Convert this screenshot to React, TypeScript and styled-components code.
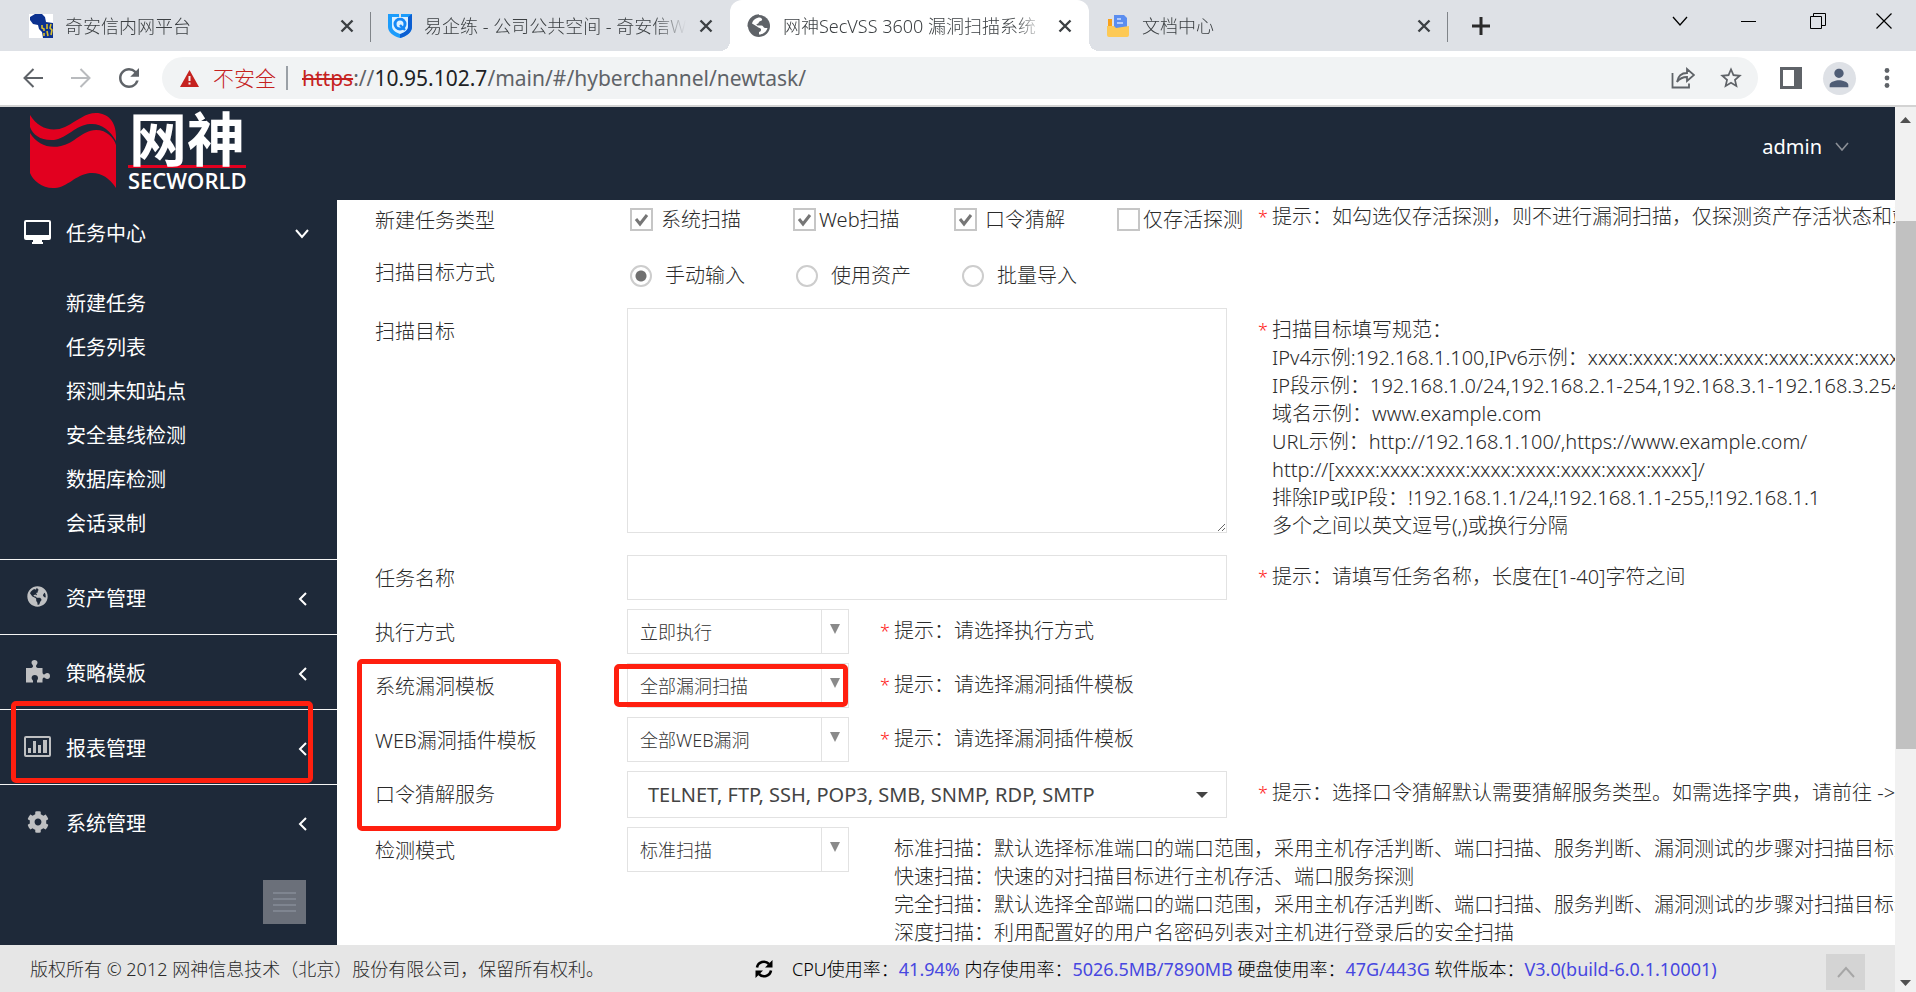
import React from 'react';
import styled, { createGlobalStyle, css } from 'styled-components';
import { FaCog, FaGlobeAmericas } from 'react-icons/fa';
import { MdPerson, MdRefresh, MdStarBorder } from 'react-icons/md';

const navy = '#1e2939';
const line = '#e2e2e2';
const red = '#ff1f0f';

const GlobalStyle = createGlobalStyle`
  * { box-sizing: border-box; }
  body { margin: 0; overflow: hidden; }
  body, button, input, select, textarea {
    font-family: "Noto Sans", "Noto Sans CJK SC", sans-serif;
    font-weight: 300;
  }
  button { border: 0; padding: 0; background: none; color: inherit; cursor: pointer; }
  svg { display: block; flex: none; }
`;

const Window = styled.div`
  display: flex;
  flex-direction: column;
  height: 100vh;
  background: #fff;
  color: #2a2a2a;
`;

/* ---------- browser chrome ---------- */

const TabStrip = styled.div`
  display: flex;
  flex: none;
  height: 51px;
  padding-left: 12px;
  background: #dee1e6;
`;

const Tab = styled.div<{ $active?: boolean; $divider?: boolean }>`
  position: relative;
  display: flex;
  align-items: center;
  gap: 12px;
  flex: 0 1 359px;
  min-width: 0;
  padding: 0 16px 0 17px;
  color: #3c4043;
  font-size: 18px;
  line-height: 24px;
  ${p => p.$active && css`
    background: #fff;
    border-radius: 12px 12px 0 0;
    &::before, &::after {
      content: '';
      position: absolute;
      bottom: 0;
      width: 10px;
      height: 10px;
    }
    &::before { right: 100%; background: radial-gradient(circle at 0 0, transparent 10px, #fff 10px); }
    &::after { left: 100%; background: radial-gradient(circle at 100% 0, transparent 10px, #fff 10px); }
  `}
  ${p => p.$divider && css`
    &::after {
      content: '';
      position: absolute;
      right: 0;
      top: 12px;
      width: 1px;
      height: 30px;
      background: #808489;
    }
  `}
`;

const TabTitle = styled.span`
  flex: 1;
  min-width: 0;
  overflow: hidden;
  white-space: nowrap;
  mask-image: linear-gradient(to right, #000 calc(100% - 30px), transparent);
`;

const IconButton = styled.button<{ $w: number; $dim?: boolean }>`
  display: flex;
  align-items: center;
  justify-content: center;
  flex: none;
  width: ${p => p.$w}px;
  ${p => p.$dim && css`color: #b9bbbe;`}
`;

const WindowControls = styled.div`
  display: flex;
  height: 42px;
  margin-left: auto;
  color: #000;
`;

const Toolbar = styled.div`
  display: flex;
  align-items: center;
  flex: none;
  height: 56px;
  padding: 0 5px 0 9px;
  border-bottom: 2px solid #d3d3d3;
  color: #5f6368;
`;

const Omnibox = styled.div`
  display: flex;
  align-items: center;
  flex: 1;
  height: 42px;
  margin: 0 9px;
  padding: 0 3px 0 18px;
  border-radius: 21px;
  background: #f1f3f4;
  font-size: 21px;
  line-height: 28px;
`;

const Insecure = styled.span`
  display: flex;
  align-items: center;
  gap: 14px;
  padding-right: 10px;
  border-right: 2px solid #9aa0a6;
  color: #c5221f;
  line-height: 24px;
`;

const Url = styled.span`
  flex: 1;
  margin-left: 14px;
  font-weight: 400;
  s { color: #c5221f; }
  b { color: #202124; font-weight: 400; }
`;

const Avatar = styled.span`
  display: flex;
  align-items: center;
  justify-content: center;
  width: 33px;
  height: 33px;
  border-radius: 50%;
  background: #dee1e6;
  color: #4f5d75;
`;

/* ---------- page frame ---------- */

const Viewport = styled.div`
  display: flex;
  flex: 1;
  min-height: 0;
`;

const Page = styled.div`
  display: flex;
  flex-direction: column;
  flex: 1;
  min-width: 0;
`;

const Header = styled.header`
  display: flex;
  justify-content: space-between;
  flex: none;
  height: 93px;
  padding: 6px 46px 0 30px;
  background: ${navy};
  color: #fff;
`;

const Brand = styled.div`
  display: flex;
  gap: 12px;
`;

const BrandName = styled.div`
  display: flex;
  flex-direction: column;
  width: 118px;
  font-weight: 700;
`;

const BrandTitle = styled.span`
  height: 55px;
  border-bottom: 3px solid #e2001f;
  font-family: "Noto Sans CJK SC", sans-serif;
  font-size: 58px;
  line-height: 46px;
  text-align: center;
`;

const BrandLatin = styled.span`
  font-family: "Open Sans", sans-serif;
  font-size: 22px;
  font-weight: 600;
  line-height: 24px;
`;

const UserMenu = styled.button`
  display: flex;
  align-items: center;
  gap: 13px;
  height: 66px;
  font-size: 20px;
  font-weight: 400;
  svg { color: #8b8f96; }
`;

const Body = styled.div`
  display: flex;
  flex: 1;
  min-height: 0;
`;

const Sidebar = styled.nav`
  display: flex;
  flex-direction: column;
  flex: none;
  width: 337px;
  background: ${navy};
  color: #fff;
`;

const NavGroup = styled.div<{ $first?: boolean }>`
  position: relative;
  ${p => !p.$first && css`border-top: 1px solid #f4f4f4;`}
`;

const NavHead = styled.button<{ $first?: boolean }>`
  display: flex;
  align-items: center;
  width: 100%;
  height: ${p => (p.$first ? 64 : 74)}px;
  padding: 3px ${p => (p.$first ? 28 : 30)}px 0 23px;
  font-size: 20px;
  font-weight: 400;
  line-height: 28px;
  text-align: left;
`;

const NavIcon = styled.span<{ $bright?: boolean }>`
  display: flex;
  justify-content: center;
  width: 29px;
  margin-right: 14px;
  padding-bottom: 4px;
  color: ${p => (p.$bright ? '#fff' : '#bfc0c2')};
`;

const NavText = styled.span`
  flex: 1;
`;

const SubMenu = styled.ul`
  margin: 0;
  padding: 18px 0 13px 66px;
  list-style: none;
`;

const SubLink = styled.a`
  display: block;
  color: #fff;
  font-size: 20px;
  font-weight: 400;
  line-height: 44px;
  text-decoration: none;
`;

const CollapseButton = styled.button`
  display: flex;
  align-items: center;
  justify-content: center;
  align-self: flex-end;
  width: 43px;
  height: 44px;
  margin: auto 31px 21px 0;
  background: #6b707a;
  color: #868c98;
`;

/* Red frame that marks the parts to look at. */
const Mark = styled.span<{ $top: number; $left: number; $w: number; $h: number }>`
  position: absolute;
  top: ${p => p.$top}px;
  left: ${p => p.$left}px;
  width: ${p => p.$w}px;
  height: ${p => p.$h}px;
  border: 5px solid ${red};
  border-radius: 5px;
  pointer-events: none;
`;

/* ---------- form ---------- */

const Form = styled.form`
  flex: 1;
  min-width: 0;
  padding-left: 38px;
  overflow: hidden;
`;

const Row = styled.div`
  position: relative;
  display: grid;
  grid-template-columns: 252px minmax(240px, 600px) minmax(0, 1fr);
  margin-bottom: 9px;
  font-size: 20px;
`;

const Label = styled.label<{ $h?: number }>`
  padding-top: 3px;
  line-height: ${p => p.$h ?? 42}px;
`;

const Choices = styled.div<{ $h: number; $end?: number }>`
  display: flex;
  height: ${p => p.$h}px;
  padding: 0 0 ${p => p.$end ?? 0}px 3px;
  white-space: nowrap;
`;

const Choice = styled.label<{ $w: number; $gap: number }>`
  display: flex;
  align-items: center;
  flex: none;
  gap: ${p => p.$gap}px;
  width: ${p => p.$w}px;
  line-height: 28px;
`;

const Check = styled.input`
  appearance: none;
  flex: none;
  width: 23px;
  height: 23px;
  margin: 0;
  border: 2px solid #c6c6c6;
  background: #fff center / 19px 19px no-repeat;
  &:checked {
    background-image: url("data:image/svg+xml,%3Csvg xmlns='http://www.w3.org/2000/svg' viewBox='0 0 19 19'%3E%3Cpath d='M4 9l4 5 7-9' fill='none' stroke='%23767676' stroke-width='3'/%3E%3C/svg%3E");
  }
`;

const Radio = styled.input`
  appearance: none;
  flex: none;
  width: 22px;
  height: 22px;
  margin: 0;
  border: 2px solid #cdcdcd;
  border-radius: 50%;
  &:checked { background: radial-gradient(circle, #707070 5px, transparent 6px); }
`;

const TargetBox = styled.textarea`
  display: block;
  width: 100%;
  height: 225px;
  margin: 0 0 13px;
  border: 1px solid ${line};
  outline: 0;
  background: transparent;
  font-size: 18px;
`;

const TextBox = styled.input`
  width: 100%;
  height: 45px;
  border: 1px solid ${line};
  font-size: 18px;
`;

const SelectLine = styled.div`
  display: flex;
  grid-column: 2 / 4;
  min-width: 0;
`;

const SelectFrame = styled.div`
  position: relative;
  flex: none;
  width: 222px;
  height: 45px;
`;

const Select = styled.select`
  appearance: none;
  width: 100%;
  height: 45px;
  padding: 0 40px 0 12px;
  border: 1px solid ${line};
  border-radius: 0;
  background: #fff;
  color: #333;
  font-size: 18px;
  line-height: 28px;
`;

const SelectArrow = styled.span`
  position: absolute;
  top: 1px;
  right: 1px;
  display: flex;
  justify-content: center;
  width: 27px;
  height: 43px;
  padding-top: 14px;
  border-left: 1px solid ${line};
  color: #8a8a8a;
  pointer-events: none;
`;

const MultiSelect = styled.button`
  display: flex;
  align-items: center;
  justify-content: space-between;
  width: 100%;
  height: 47px;
  padding: 0 18px 0 20px;
  border: 1px solid ${line};
  color: #444;
  font-size: 20px;
  font-weight: 400;
  line-height: 28px;
  white-space: nowrap;
`;

const Hint = styled.div<{ $top?: number; $indent?: number }>`
  display: flex;
  min-width: 0;
  padding: ${p => p.$top ?? 8}px 0 0 ${p => p.$indent ?? 31}px;
  font-size: 20px;
  line-height: 28px;
  white-space: nowrap;
  overflow: hidden;
`;

const Star = styled.span`
  flex: none;
  width: 14px;
  color: #f22;
  font-size: 18px;
`;

const Lines = styled.div`
  p { margin: 0; }
`;

/* ---------- footer and scrollbar ---------- */

const Footer = styled.footer`
  display: flex;
  align-items: center;
  flex: none;
  height: 47px;
  padding: 0 30px;
  background: #e6e6e6;
  font-size: 18px;
  line-height: 28px;
  white-space: nowrap;
`;

const Copyright = styled.span`
  flex: 0 0 725px;
`;

const Stats = styled.span`
  flex: 1;
  margin-left: 19px;
  color: #000;
  b { color: #4747e0; font-weight: 400; }
`;

const TopButton = styled.button`
  display: flex;
  align-items: center;
  justify-content: center;
  width: 39px;
  height: 36px;
  margin-top: 6px;
  background: #d4d4d4;
  color: #a6a6a6;
`;

const ScrollTrack = styled.div`
  display: flex;
  flex-direction: column;
  align-items: center;
  flex: none;
  width: 21px;
  padding: 10px 0 6px;
  background: #f1f1f1;
  color: #505050;
`;

const ScrollRail = styled.div`
  display: flex;
  flex: 1;
  flex-direction: column;
  align-self: stretch;
  padding: 98px 0 0 1px;
`;

const Thumb = styled.div`
  height: 69.5%;
  background: #c1c1c1;
`;

/* ---------- icons ---------- */

type StrokeProps = { w: number; h: number; d: string; sw?: number };
const Stroke = ({ w, h, d, sw = 2 }: StrokeProps) => (
  <svg width={w} height={h} viewBox={`0 0 ${w} ${h}`} fill="none" stroke="currentColor" strokeWidth={sw} aria-hidden="true">
    <path d={d} />
  </svg>
);
type ShapeProps = { w: number; h: number; d: string };
const Shape = ({ w, h, d }: ShapeProps) => (
  <svg width={w} height={h} viewBox={`0 0 ${w} ${h}`} fill="currentColor" fillRule="evenodd" aria-hidden="true">
    <path d={d} />
  </svg>
);

const IntranetIcon = () => (
  <svg width="24" height="24" viewBox="0 0 24 24" aria-hidden="true">
    <rect width="24" height="24" fill="#fff" />
    <path d="M1 3l5-3 7 0 3 3 1 5 7 1v15H14l-1-6-3-3-1-4-5-1-3-4z" fill="#0b3190" />
    <path d="M13 11v3l2 1v2M15 19v3M18 10v5M18 17l1 5M22 10l-1 4 2 2-1 5" stroke="#d9bf2c" strokeWidth="1.6" fill="none" />
  </svg>
);
const ShieldIcon = () => (
  <svg width="24" height="24" viewBox="0 0 24 24" aria-hidden="true">
    <path d="M0 0h24v13c0 5-5 9-12 11C5 22 0 18 0 13z" fill="#1c9cfb" />
    <path d="M24 0v13c0 5-5 9-12 11v-4c5-2 8-4 8-8V3z" fill="#0c5fd2" />
    <path d="M4 3h16v9c0 4-3 6-8 8-5-2-8-4-8-8z" fill="#fff" opacity=".85" />
    <circle cx="12" cy="10" r="5" fill="none" stroke="#1687f5" strokeWidth="3" />
    <path d="M12 11l5 5" stroke="#1687f5" strokeWidth="2.400" />
    <path d="M11 0h2v4h-2z" fill="#dee1e6" />
  </svg>
);
const SiteGlobeIcon = () => (
  <svg width="24" height="24" viewBox="0 0 24 24" aria-hidden="true">
    <circle cx="12" cy="12" r="11" fill="#5f6368" />
    <path d="M13 3.500c3 1 2.500 3 .5 3.500-2 .5-1.500 2.500-3.500 3-1 .3-.5 1.500.5 1.500h4c2 0 1.500 2.500 3.500 2.500h2.500c-1 4-4.500 6.500-8.500 6.500v-2.500c2-.5 2-1.500 2-3-1-1.500-3-1-4-2.500L5 9.500C6 6 9 3.500 13 3.500z" fill="#fff" />
    <path d="M12 1a11 11 0 0 0-6 1.900A11 11 0 0 0 1.200 12c2 1 4 2 5 5l2 4" fill="none" stroke="#5f6368" strokeWidth="1.500" />
  </svg>
);
const FolderIcon = () => (
  <svg width="24" height="24" viewBox="0 0 24 24" aria-hidden="true">
    <path d="M2 5h4v9H2z" fill="#f9a11b" />
    <path d="M8 1h10l3 3v12H8z" fill="#5b8def" />
    <path d="M11 5h4M11 9h6" stroke="#cfe0ff" strokeWidth="1.5" />
    <path d="M1 12h7l2 2 13-2v9a2 2 0 0 1-2 2H3a2 2 0 0 1-2-2z" fill="#fdc955" />
  </svg>
);
const FlagLogo = () => (
  <svg width="86" height="76" viewBox="0 0 86 76" role="img" aria-label="SECWORLD">
    <path d="M0 2C8 15 22 20 35 14C49 7 55 0 66 0C78 0 86 9 86 23V28C80 17 71 10 60 11C45 12 38 25 24 27C11 28 3 22 0 14Z" fill="#e2001f" />
    <path d="M0 20C7 31 18 36 31 33C45 30 51 18 66 17C77 17 84 25 86 32V75C79 64 70 59 60 60C45 62 38 74 25 75C13 76 3 68 0 60Z" fill="#e2001f" />
  </svg>
);
const CloseIcon = () => <Stroke w={16} h={16} d="M2.500 2.500l11 11M13.500 2.500l-11 11" sw={2.4} />;
const ShareIcon = () => (
  <Stroke w={24} h={24} d="M1.500 7v14.500h16.500v-4M6 16c1-6 4-9 10-9V3l7 6-7 6v-4c-4 0-7 1-10 5z" sw={1.8} />
);
const MonitorIcon = () => (
  <Shape w={27} h={24} d="M2 0h23a2 2 0 0 1 2 2v16a2 2 0 0 1-2 2h-7v2h1v2H8v-2h1v-2H2a2 2 0 0 1-2-2V2a2 2 0 0 1 2-2zM2 2v13h23V2z" />
);
const PuzzleIcon = () => (
  <Shape w={24} h={23} d="M0 8h4c2 0 3-.5 3-2 0-1-1.500-1.500-1.500-3.200C5.500 1 6.700 0 8.500 0s3 1 3 2.800C11.500 4.500 10 5 10 6c0 1.500 1 2 3 2h3.500v4c0 1.500.5 2.500 1.500 2.500s1.500-1.500 3.200-1.500c1.800 0 2.800 1.200 2.800 3s-1 3-2.800 3c-1.700 0-2.200-1.500-3.200-1.500s-1.500 1-1.500 2.500v2.500H11v-1.500c0-1 1-1.500 1-3 0-1.800-1.300-3-3.200-3s-3.200 1.200-3.200 3c0 1.500 1.400 2 1.400 3V22.500H0z" />
);
const ChartIcon = () => (
  <Shape w={27} h={21} d="M2 0h23a2 2 0 0 1 2 2v17a2 2 0 0 1-2 2H2a2 2 0 0 1-2-2V2a2 2 0 0 1 2-2zM2 2v17h23V2zM4 12h3v5H4zM9 5h3v12H9zM14 9h3v8h-3zM19 4h4v13h-4z" />
);
const SyncIcon = () => (
  <svg width="18" height="18" viewBox="0 0 18 18" aria-hidden="true">
    <path d="M2 7.500A7 7 0 0 1 14 4M16 10.500A7 7 0 0 1 4 14" fill="none" stroke="#000" strokeWidth="2.600" />
    <path d="M17.500 0v7.500H10zM.5 18v-7.500H8z" fill="#000" />
  </svg>
);

/* ---------- data ---------- */

const tabs = [
  { title: '奇安信内网平台', icon: <IntranetIcon />, divider: true },
  { title: '易企练 - 公司公共空间 - 奇安信Wiki', icon: <ShieldIcon /> },
  { title: '网神SecVSS 3600 漏洞扫描系统', icon: <SiteGlobeIcon />, active: true },
  { title: '文档中心', icon: <FolderIcon />, divider: true },
];
const subItems = ['新建任务', '任务列表', '探测未知站点', '安全基线检测', '数据库检测', '会话录制'];
const groups = [
  { text: '资产管理', icon: <FaGlobeAmericas size={21} /> },
  { text: '策略模板', icon: <PuzzleIcon /> },
  { text: '报表管理', icon: <ChartIcon />, marked: true },
  { text: '系统管理', icon: <FaCog size={22} /> },
];
const kinds = [
  { text: '系统扫描', on: true, w: 163, gap: 8 },
  { text: 'Web扫描', on: true, w: 161, gap: 3 },
  { text: '口令猜解', on: true, w: 163, gap: 8 },
  { text: '仅存活探测', on: false, w: 130, gap: 3 },
];
const targetModes = ['手动输入', '使用资产', '批量导入'];
const targetRules = [
  '扫描目标填写规范：',
  'IPv4示例:192.168.1.100,IPv6示例：xxxx:xxxx:xxxx:xxxx:xxxx:xxxx:xxxx:xxxx',
  'IP段示例：192.168.1.0/24,192.168.2.1-254,192.168.3.1-192.168.3.254',
  '域名示例：www.example.com',
  'URL示例：http://192.168.1.100/,https://www.example.com/',
  'http://[xxxx:xxxx:xxxx:xxxx:xxxx:xxxx:xxxx:xxxx]/',
  '排除IP或IP段：!192.168.1.1/24,!192.168.1.1-255,!192.168.1.1',
  '多个之间以英文逗号(,)或换行分隔',
];
const modeNotes = [
  '标准扫描：默认选择标准端口的端口范围，采用主机存活判断、端口扫描、服务判断、漏洞测试的步骤对扫描目标进行扫描',
  '快速扫描：快速的对扫描目标进行主机存活、端口服务探测',
  '完全扫描：默认选择全部端口的端口范围，采用主机存活判断、端口扫描、服务判断、漏洞测试的步骤对扫描目标进行扫描',
  '深度扫描：利用配置好的用户名密码列表对主机进行登录后的安全扫描',
];

type SelectFieldProps = {
  id: string;
  label: string;
  value: string;
  hint?: string;
  notes?: string[];
  children?: React.ReactNode;
};
const SelectField = ({ id, label, value, hint, notes, children }: SelectFieldProps) => (
  <Row>
    <Label htmlFor={id}>{label}</Label>
    <SelectLine>
      <SelectFrame>
        <Select id={id}><option>{value}</option></Select>
        <SelectArrow><Shape w={10} h={10} d="M0 0h10L5 10z" /></SelectArrow>
      </SelectFrame>
      {hint && <Hint><Star>*</Star>{hint}</Hint>}
      {notes && <Hint $indent={45}><Lines>{notes.map(n => <p key={n}>{n}</p>)}</Lines></Hint>}
    </SelectLine>
    {children}
  </Row>
);

export default function App() {
  return (
    <Window>
      <GlobalStyle />
      <TabStrip>
        {tabs.map(t => (
          <Tab key={t.title} $active={t.active} $divider={t.divider}>
            {t.icon}
            <TabTitle>{t.title}</TabTitle>
            <IconButton $w={16} aria-label="关闭标签页"><CloseIcon /></IconButton>
          </Tab>
        ))}
        <IconButton $w={66} aria-label="新标签页"><Stroke w={18} h={18} d="M9 0v18M0 9h18" sw={3} /></IconButton>
        <WindowControls>
          <IconButton $w={69} aria-label="搜索标签页"><Stroke w={16} h={10} d="M1 1l7 8 7-8" sw={1.3} /></IconButton>
          <IconButton $w={69} aria-label="最小化"><Stroke w={15} h={3} d="M0 1.500h15" sw={1} /></IconButton>
          <IconButton $w={69} aria-label="还原"><Stroke w={16} h={16} d="M.5 3.500h11v12H.5zM3.500 3V.5h12v12H12" sw={1} /></IconButton>
          <IconButton $w={64} aria-label="关闭"><Stroke w={16} h={16} d="M.5.5l15 15M15.500.5l-15 15" sw={1.2} /></IconButton>
        </WindowControls>
      </TabStrip>
      <Toolbar>
        <IconButton $w={48} aria-label="后退"><Stroke w={20} h={20} d="M20 10H2M10.500 1L1.500 10l9 9" /></IconButton>
        <IconButton $w={48} $dim aria-label="前进"><Stroke w={20} h={20} d="M0 10h18M9.500 1l9 9-9 9" /></IconButton>
        <IconButton $w={48} aria-label="重新加载"><MdRefresh size={30} /></IconButton>
        <Omnibox>
          <Insecure>
            <Shape w={19} h={17} d="M9.500 0L19 17H0zM8.500 6v5h2V6zM8.500 12.500v2h2v-2z" />
            不安全
          </Insecure>
          <Url><s>https</s>://<b>10.95.102.7</b>/main/#/hyberchannel/newtask/</Url>
          <IconButton $w={48} aria-label="分享"><ShareIcon /></IconButton>
          <IconButton $w={48} aria-label="收藏"><MdStarBorder size={26} /></IconButton>
        </Omnibox>
        <IconButton $w={48} aria-label="侧边栏"><Shape w={22} h={22} d="M0 0h22v22H0zM3 3v16h11V3z" /></IconButton>
        <IconButton $w={48} aria-label="用户"><Avatar><MdPerson size={28} /></Avatar></IconButton>
        <IconButton $w={48} aria-label="菜单">
          <svg width="6" height="20" viewBox="0 0 6 20" fill="currentColor"><circle cx="3" cy="2.500" r="2.400" /><circle cx="3" cy="10" r="2.400" /><circle cx="3" cy="17.500" r="2.400" /></svg>
        </IconButton>
      </Toolbar>
      <Viewport>
        <Page>
          <Header>
            <Brand>
              <FlagLogo />
              <BrandName><BrandTitle>网神</BrandTitle><BrandLatin>SECWORLD</BrandLatin></BrandName>
            </Brand>
            <UserMenu>admin<Stroke w={14} h={9} d="M1 1l6 7 6-7" sw={1.6} /></UserMenu>
          </Header>
          <Body>
            <Sidebar>
              <NavGroup $first>
                <NavHead $first>
                  <NavIcon $bright><MonitorIcon /></NavIcon>
                  <NavText>任务中心</NavText>
                  <Stroke w={14} h={10} d="M1 1l6 7 6-7" />
                </NavHead>
                <SubMenu>
                  {subItems.map(s => <li key={s}><SubLink href="#newtask">{s}</SubLink></li>)}
                </SubMenu>
              </NavGroup>
              {groups.map(g => (
                <NavGroup key={g.text}>
                  <NavHead>
                    <NavIcon>{g.icon}</NavIcon>
                    <NavText>{g.text}</NavText>
                    <Stroke w={9} h={14} d="M8 1L2 7l6 6" />
                  </NavHead>
                  {g.marked && <Mark $top={-9} $left={11} $w={302} $h={82} />}
                </NavGroup>
              ))}
              <CollapseButton aria-label="收起菜单"><Stroke w={23} h={20} d="M0 1h23M0 7h23M0 13h23M0 19h23" sw={1.5} /></CollapseButton>
            </Sidebar>
            <Form>
              <Row>
                <Label as="span" $h={36}>新建任务类型</Label>
                <Choices $h={43} $end={4} role="group" aria-label="新建任务类型">
                  {kinds.map(k => (
                    <Choice key={k.text} $w={k.w} $gap={k.gap}><Check type="checkbox" defaultChecked={k.on} />{k.text}</Choice>
                  ))}
                </Choices>
                <Hint $top={3}><Star>*</Star>提示：如勾选仅存活探测，则不进行漏洞扫描，仅探测资产存活状态和端口服务</Hint>
              </Row>
              <Row>
                <Label as="span" $h={36}>扫描目标方式</Label>
                <Choices $h={47} role="radiogroup" aria-label="扫描目标方式">
                  {targetModes.map((m, i) => (
                    <Choice key={m} $w={166} $gap={13}><Radio type="radio" name="target-mode" defaultChecked={i === 0} />{m}</Choice>
                  ))}
                </Choices>
              </Row>
              <Row>
                <Label htmlFor="target">扫描目标</Label>
                <TargetBox id="target" />
                <Hint><Star>*</Star><Lines>{targetRules.map(r => <p key={r}>{r}</p>)}</Lines></Hint>
              </Row>
              <Row>
                <Label htmlFor="task-name">任务名称</Label>
                <TextBox id="task-name" type="text" />
                <Hint><Star>*</Star>提示：请填写任务名称，长度在[1-40]字符之间</Hint>
              </Row>
              <SelectField id="run" label="执行方式" value="立即执行" hint="提示：请选择执行方式" />
              <SelectField id="sys" label="系统漏洞模板" value="全部漏洞扫描" hint="提示：请选择漏洞插件模板">
                <Mark $top={-4} $left={-18} $w={204} $h={172} />
                <Mark $top={1} $left={239} $w={234} $h={43} />
              </SelectField>
              <SelectField id="web" label="WEB漏洞插件模板" value="全部WEB漏洞" hint="提示：请选择漏洞插件模板" />
              <Row>
                <Label htmlFor="guess">口令猜解服务</Label>
                <MultiSelect id="guess" type="button">TELNET, FTP, SSH, POP3, SMB, SNMP, RDP, SMTP<Shape w={12} h={6} d="M0 0h12L6 6z" /></MultiSelect>
                <Hint><Star>*</Star>提示：选择口令猜解默认需要猜解服务类型。如需选择字典，请前往 -&gt; 高级选项</Hint>
              </Row>
              <SelectField id="mode" label="检测模式" value="标准扫描" notes={modeNotes} />
            </Form>
          </Body>
          <Footer>
            <Copyright>版权所有 © 2012 网神信息技术（北京）股份有限公司，保留所有权利。</Copyright>
            <SyncIcon />
            <Stats>CPU使用率：<b>41.94%</b> 内存使用率：<b>5026.5MB/7890MB</b> 硬盘使用率：<b>47G/443G</b> 软件版本：<b>V3.0(build-6.0.1.10001)</b></Stats>
            <TopButton aria-label="返回顶部"><Stroke w={18} h={12} d="M1 11l8-9 8 9" /></TopButton>
          </Footer>
        </Page>
        <ScrollTrack>
          <Shape w={11} h={6} d="M0 6h11L5.500 0z" />
          <ScrollRail><Thumb /></ScrollRail>
          <Shape w={11} h={6} d="M0 0h11L5.500 6z" />
        </ScrollTrack>
      </Viewport>
    </Window>
  );
}
